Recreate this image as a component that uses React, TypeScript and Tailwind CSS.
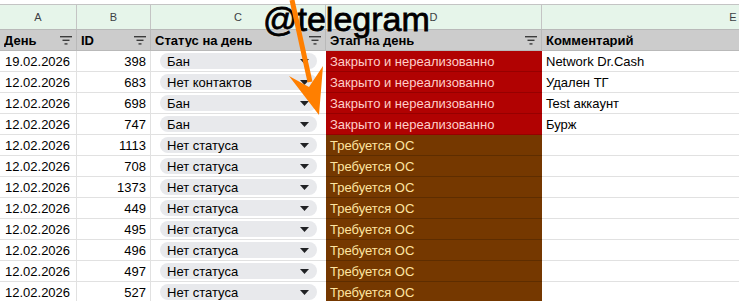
import React from 'react';

type Row = {
  day: string;
  id: string;
  status: string;
  stage: 'closed' | 'wait';
  comment?: string;
};

const rows: Row[] = [
  { day: '19.02.2026', id: '398', status: 'Бан', stage: 'closed', comment: 'Network Dr.Cash' },
  { day: '12.02.2026', id: '683', status: 'Нет контактов', stage: 'closed', comment: 'Удален ТГ' },
  { day: '12.02.2026', id: '698', status: 'Бан', stage: 'closed', comment: 'Test аккаунт' },
  { day: '12.02.2026', id: '747', status: 'Бан', stage: 'closed', comment: 'Бурж' },
  { day: '12.02.2026', id: '1113', status: 'Нет статуса', stage: 'wait' },
  { day: '12.02.2026', id: '708', status: 'Нет статуса', stage: 'wait' },
  { day: '12.02.2026', id: '1373', status: 'Нет статуса', stage: 'wait' },
  { day: '12.02.2026', id: '449', status: 'Нет статуса', stage: 'wait' },
  { day: '12.02.2026', id: '495', status: 'Нет статуса', stage: 'wait' },
  { day: '12.02.2026', id: '496', status: 'Нет статуса', stage: 'wait' },
  { day: '12.02.2026', id: '497', status: 'Нет статуса', stage: 'wait' },
  { day: '12.02.2026', id: '527', status: 'Нет статуса', stage: 'wait' },
];

const cols = 'grid grid-cols-[77px_74px_175px_216px_382px]';

function FilterIcon() {
  return (
    <svg width="12" height="9" viewBox="0 0 12 9" className="shrink-0">
      <rect x="0" y="0" width="12" height="1.4" fill="#3c3c3c" />
      <rect x="2.5" y="3.6" width="7" height="1.4" fill="#3c3c3c" />
      <rect x="4.5" y="7.2" width="3" height="1.4" fill="#3c3c3c" />
    </svg>
  );
}

function Caret() {
  return (
    <svg width="9" height="5" viewBox="0 0 9 5" className="shrink-0">
      <path d="M0 0h9L4.5 5z" fill="#202124" />
    </svg>
  );
}

function HeaderCell({ title, filter = true }: { title: string; filter?: boolean }) {
  return (
    <div className="flex h-[20px] items-center justify-between border-r border-[#b9b9b9] pl-[4px] pr-[4px] font-bold">
      <span className="truncate">{title}</span>
      {filter && <FilterIcon />}
    </div>
  );
}

export default function App() {
  return (
    <div className="relative h-[301px] w-[739px] overflow-hidden bg-white font-['Liberation_Sans',Arial,sans-serif] text-[13px] text-[#000]">
      <div className="h-[5px] border-b border-[#c4c4c4] bg-white" />

      {/* column letters */}
      <div className={`${cols} h-[24px] bg-[#e6f5ea] text-[11px] text-[#3c4043]`}>
        {['A', 'B', 'C', 'D'].map((l) => (
          <div key={l} className="flex items-center justify-center border-r border-[#c4c4c4]">
            {l}
          </div>
        ))}
        <div className="flex items-center justify-center">E</div>
      </div>

      {/* header row */}
      <div className={`${cols} border-y border-[#b9b9b9] bg-[#cccccc] leading-none`}>
        <HeaderCell title="День" />
        <HeaderCell title="ID" />
        <HeaderCell title="Статус на день" />
        <HeaderCell title="Этап на день" />
        <HeaderCell title="Комментарий" filter={false} />
      </div>

      {rows.map((r, i) => (
        <div key={i} className={`${cols} h-[21px] leading-none`}>
          <div className="flex items-center border-b border-r border-[#e1e1e1] pl-[5px]">{r.day}</div>
          <div className="flex items-center justify-end border-b border-r border-[#e1e1e1] pr-[4px]">{r.id}</div>
          <div className="flex items-center border-b border-[#e1e1e1] pl-[9px] pr-[9px]">
            <div className="flex h-[16px] w-full items-center justify-between rounded-full bg-[#e8e9ec] pl-[7px] pr-[8px]">
              <span>{r.status}</span>
              <Caret />
            </div>
          </div>
          {r.stage === 'closed' ? (
            <div className="flex items-center border-b border-[#960000] bg-[#b10202] pl-[4px] text-[#ffcfc9]">
              Закрыто и нереализованно
            </div>
          ) : (
            <div className="flex items-center border-b border-[#5e2d00] bg-[#753800] pl-[4px] text-[#ffe5a0]">
              Требуется ОС
            </div>
          )}
          <div className="flex items-center border-b border-[#e1e1e1] pl-[4px]">{r.comment}</div>
        </div>
      ))}

      {/* watermark overlay */}
      <div className="absolute left-[263px] top-[2px] text-[34px] leading-none text-black [-webkit-text-stroke:0.8px_#000] [text-shadow:0_0_2px_#fff]">
        @telegram
      </div>
      <svg className="pointer-events-none absolute left-0 top-0" width="739" height="301" viewBox="0 0 739 301">
        <line x1="292" y1="0" x2="310" y2="82" stroke="#ff7f00" strokeWidth="5" />
        <polygon points="289,76 309,87 323,66 319,115" fill="#ff7f00" />
      </svg>
    </div>
  );
}
